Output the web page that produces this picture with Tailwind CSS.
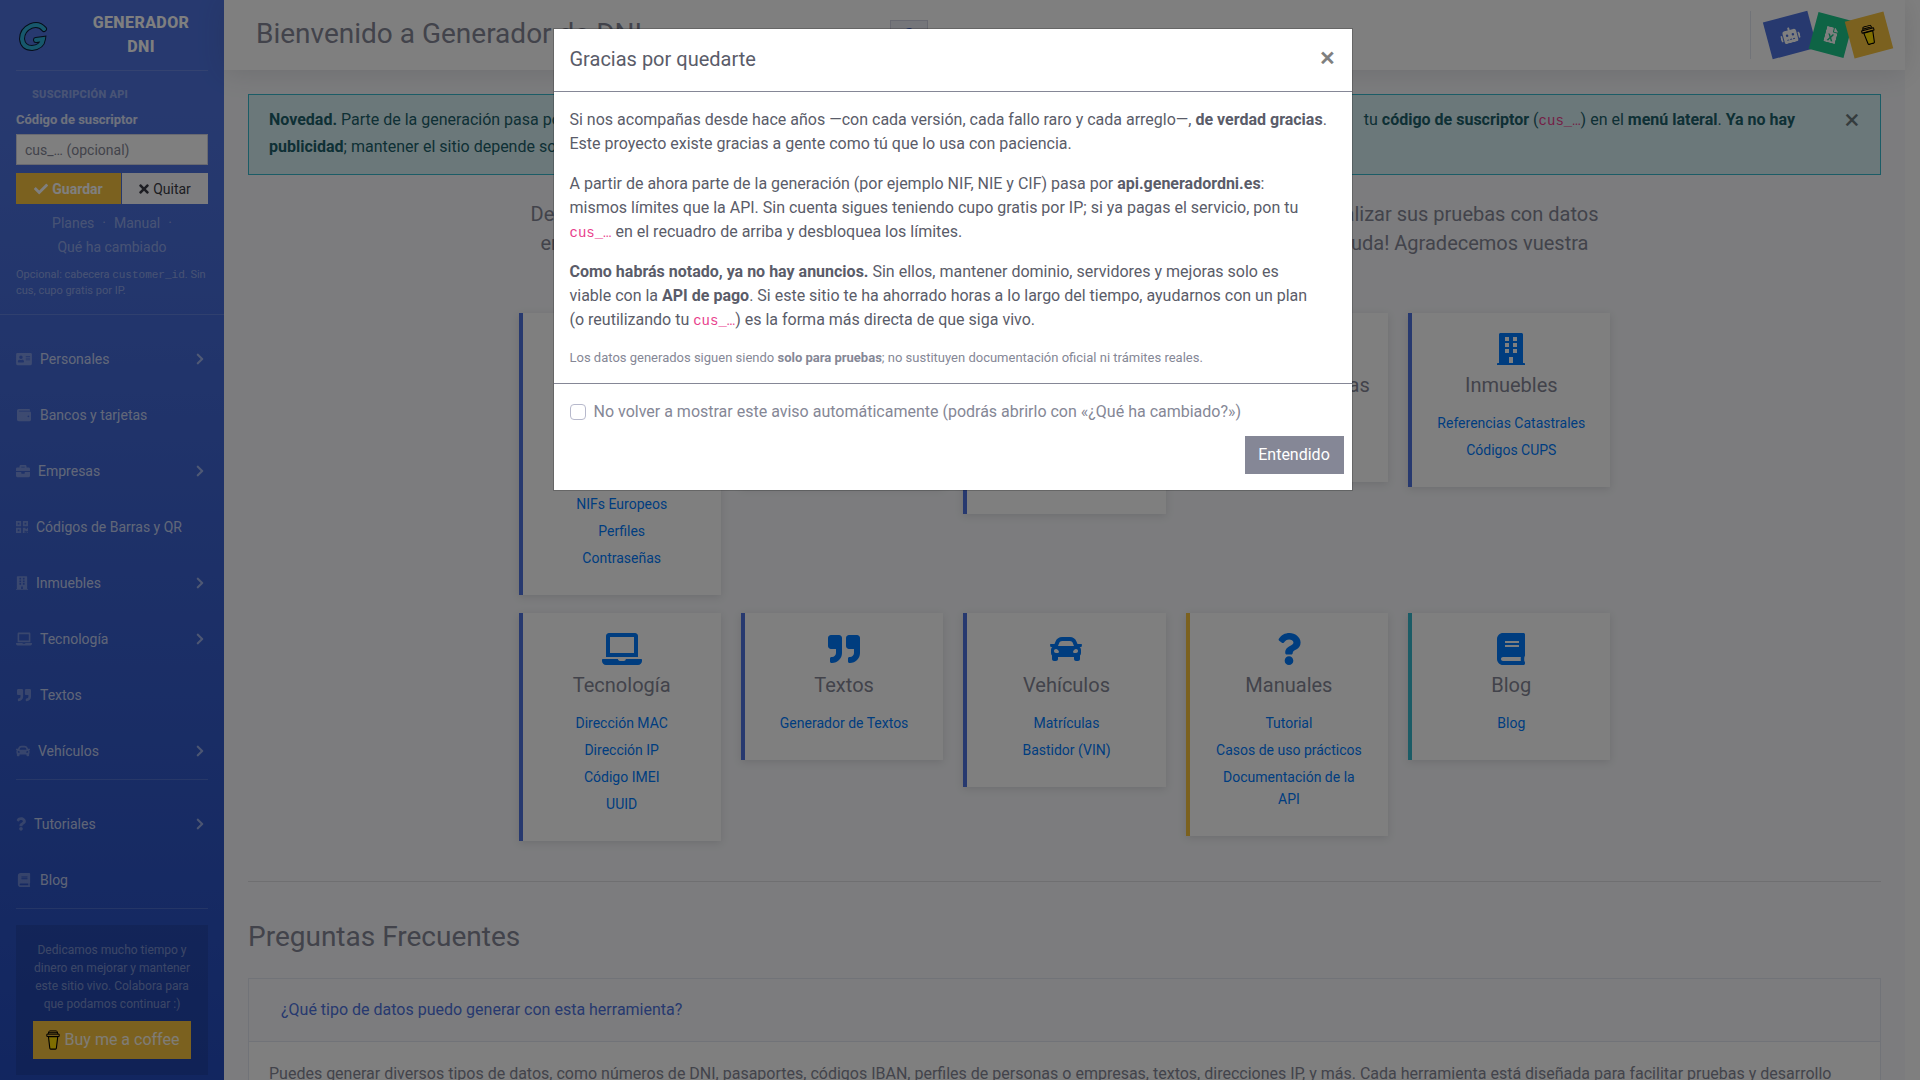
<!DOCTYPE html>
<html lang="es">
<head>
<meta charset="utf-8">
<meta name="viewport" content="width=device-width, initial-scale=1">
<title>Generador de DNI</title>
<script src="https://cdn.jsdelivr.net/npm/@tailwindcss/browser@4"></script>
</head>
<body class="h-screen overflow-hidden bg-white pr-[15px] font-[Roboto,sans-serif] text-base text-[#858796]">

<!-- Icon library -->
<svg class="hidden" aria-hidden="true">
  <symbol id="check" viewBox="0 0 512 512"><path d="M173.898 439.404l-166.4-166.4c-9.997-9.997-9.997-26.206 0-36.204l36.203-36.204c9.997-9.998 26.207-9.998 36.204 0L192 312.69 432.095 72.596c9.997-9.997 26.207-9.997 36.204 0l36.203 36.204c9.997 9.997 9.997 26.206 0 36.204l-294.4 294.401c-9.998 9.997-26.207 9.997-36.204-.001z"/></symbol>
  <symbol id="times" viewBox="0 0 352 512"><path d="M242.72 256l100.07-100.07c12.28-12.28 12.28-32.19 0-44.48l-22.24-22.24c-12.28-12.28-32.19-12.28-44.48 0L176 189.28 75.93 89.21c-12.28-12.28-32.19-12.28-44.48 0L9.21 111.45c-12.28 12.28-12.28 32.19 0 44.48L109.28 256 9.21 356.07c-12.28 12.28-12.28 32.19 0 44.48l22.24 22.24c12.28 12.28 32.2 12.28 44.48 0L176 322.72l100.07 100.07c12.28 12.28 32.2 12.28 44.48 0l22.24-22.24c12.28-12.28 12.28-32.19 0-44.48L242.72 256z"/></symbol>
  <symbol id="chevron" viewBox="0 0 320 512"><path d="M285.476 272.971L91.132 467.314c-9.373 9.373-24.569 9.373-33.941 0l-22.667-22.667c-9.357-9.357-9.375-24.522-.04-33.901L188.505 256 34.484 101.255c-9.335-9.379-9.317-24.544.04-33.901l22.667-22.667c9.373-9.373 24.569-9.373 33.941 0L285.475 239.03c9.373 9.372 9.373 24.568.001 33.941z"/></symbol>
  <symbol id="idcard" viewBox="0 0 576 512"><path fill-rule="evenodd" d="M48 32h480a48 48 0 0 1 48 48v352a48 48 0 0 1-48 48H48a48 48 0 0 1-48-48V80a48 48 0 0 1 48-48zm128 96a64 64 0 1 0 0 128 64 64 0 0 0 0-128zM64 360c0 13 10 24 22 24h180c12 0 22-11 22-24v-16c0-36-30-60-62-60-20 10-80 10-100 0-32 0-62 24-62 60zM352 144v32h160v-32zm0 64v32h160v-32zm0 64v32h160v-32z"/></symbol>
  <symbol id="wallet" viewBox="0 0 512 512"><path fill-rule="evenodd" d="M461 128H80a16 16 0 0 1 0-32h384c9 0 16-7 16-16 0-26-21-48-48-48H64C29 32 0 61 0 96v320c0 35 29 64 64 64h397c28 0 51-22 51-48V176c0-26-23-48-51-48zm-45 208a32 32 0 1 1 0-64 32 32 0 0 1 0 64z"/></symbol>
  <symbol id="briefcase" viewBox="0 0 512 512"><path fill-rule="evenodd" d="M320 336a16 16 0 0 1-16 16h-96a16 16 0 0 1-16-16v-48H0v144c0 26 22 48 48 48h416c26 0 48-22 48-48V288H320zm144-208h-80V80c0-26-22-48-48-48H176c-26 0-48 22-48 48v48H48c-26 0-48 22-48 48v80h512v-80c0-26-22-48-48-48zm-144 0H192V96h128z"/></symbol>
  <symbol id="qrcode" viewBox="0 0 448 512"><path fill-rule="evenodd" d="M0 224h192V32H0zm64-128h64v64H64zm192-64v192h192V32zm128 128h-64V96h64zM0 480h192V288H0zm64-128h64v64H64zm352-64h32v128h-96v-32h-32v96h-64V288h96v32h64zm0 160h32v32h-32zm-64 0h32v32h-32z"/></symbol>
  <symbol id="building" viewBox="0 0 448 512"><path fill-rule="evenodd" d="M436 480h-20V24c0-13.255-10.745-24-24-24H56C42.745 0 32 10.745 32 24v456H12c-6.627 0-12 5.373-12 12v20h448v-20c0-6.627-5.373-12-12-12zM128 64h64v64h-64zm128 0h64v64h-64zM128 160h64v64h-64zm128 0h64v64h-64zM128 256h64v64h-64zm128 0h64v64h-64zM192 384h64v96h-64z"/></symbol>
  <symbol id="laptop" viewBox="0 0 640 512"><path d="M624 416H381.54c-.74 19.81-14.71 32-32.74 32H288c-18.69 0-33.02-17.47-32.77-32H16c-8.8 0-16 7.2-16 16v16c0 35.2 28.8 64 64 64h512c35.2 0 64-28.8 64-64v-16c0-8.8-7.2-16-16-16zM576 48c0-26.4-21.6-48-48-48H112C85.6 0 64 21.6 64 48v336h512V48zm-64 272H128V64h384v256z"/></symbol>
  <symbol id="quote" viewBox="0 0 512 512"><path d="M464 32H336c-26.5 0-48 21.5-48 48v128c0 26.5 21.5 48 48 48h80v64c0 35.3-28.7 64-64 64h-8c-13.3 0-24 10.7-24 24v48c0 13.3 10.7 24 24 24h8c88.4 0 160-71.6 160-160V80c0-26.5-21.5-48-48-48zm-288 0H48C21.5 32 0 53.5 0 80v128c0 26.5 21.5 48 48 48h80v64c0 35.3-28.7 64-64 64h-8c-13.3 0-24 10.7-24 24v48c0 13.3 10.7 24 24 24h8c88.4 0 160-71.6 160-160V80c0-26.5-21.5-48-48-48z"/></symbol>
  <symbol id="car" viewBox="0 0 512 512"><path d="M499.99 176h-59.87l-16.64-41.6C406.38 91.63 365.57 64 319.5 64h-127c-46.06 0-86.88 27.63-103.99 70.4L71.87 176H12.01C4.2 176-1.53 183.34.37 190.91l6 24C7.7 220.25 12.5 224 18.01 224h20.07C24.65 235.73 16 252.78 16 272v48c0 16.12 6.16 30.67 16 41.93V416c0 17.67 14.33 32 32 32h32c17.67 0 32-14.33 32-32v-32h256v32c0 17.67 14.33 32 32 32h32c17.67 0 32-14.33 32-32v-54.07c9.84-11.25 16-25.8 16-41.93v-48c0-19.22-8.65-36.27-22.07-48H494c5.51 0 10.31-3.75 11.64-9.09l6-24c1.89-7.57-3.84-14.91-11.65-14.91zm-352.06-17.83c7.29-18.22 24.94-30.17 44.57-30.17h127c19.63 0 37.28 11.95 44.57 30.17L384 208H128l19.93-49.83zM96 319.8c-19.2 0-32-12.76-32-31.9S76.8 256 96 256s48 28.71 48 47.85-28.8 15.95-48 15.95zm320 0c-19.2 0-48 3.19-48-15.95S396.8 256 416 256s32 12.76 32 31.9-12.8 31.9-32 31.9z"/></symbol>
  <symbol id="question" viewBox="0 0 384 512"><path d="M202.021 0C122.202 0 70.503 32.703 29.914 91.026c-7.363 10.58-5.093 25.086 5.178 32.874l43.138 32.709c10.373 7.865 25.132 6.026 33.253-4.148 25.049-31.381 43.63-49.449 82.757-49.449 30.764 0 68.816 19.799 68.816 49.631 0 22.552-18.617 34.134-48.993 51.164-35.423 19.86-82.299 44.576-82.299 106.405V320c0 13.255 10.745 24 24 24h72.471c13.255 0 24-10.745 24-24v-5.773c0-42.86 125.268-44.645 125.268-160.627C377.504 66.256 286.902 0 202.021 0zM192 373.459c-38.196 0-69.271 31.075-69.271 69.271 0 38.195 31.075 69.27 69.271 69.27s69.271-31.075 69.271-69.271-31.075-69.27-69.271-69.27z"/></symbol>
  <symbol id="book" viewBox="0 0 448 512"><path d="M448 360V24c0-13.3-10.7-24-24-24H96C43 0 0 43 0 96v320c0 53 43 96 96 96h328c13.3 0 24-10.7 24-24v-16c0-7.5-3.5-14.3-8.9-18.7-4.2-15.4-4.2-59.3 0-74.7 5.4-4.3 8.9-11.1 8.9-18.6zM128 134c0-3.3 2.7-6 6-6h212c3.3 0 6 2.7 6 6v20c0 3.3-2.7 6-6 6H134c-3.3 0-6-2.7-6-6v-20zm0 64c0-3.3 2.7-6 6-6h212c3.3 0 6 2.7 6 6v20c0 3.3-2.7 6-6 6H134c-3.3 0-6-2.7-6-6v-20zm253.4 250H96c-17.7 0-32-14.3-32-32 0-17.6 14.4-32 32-32h285.4c-1.9 17.1-1.9 46.9 0 64z"/></symbol>
  <symbol id="robot" viewBox="0 0 640 512"><path d="M32,224H64V416H32A31.96166,31.96166,0,0,1,0,384V256A31.96166,31.96166,0,0,1,32,224Zm512-48V448a64.06328,64.06328,0,0,1-64,64H160a64.06328,64.06328,0,0,1-64-64V176a79.974,79.974,0,0,1,80-80H288V32a32,32,0,0,1,64,0V96H464A79.974,79.974,0,0,1,544,176ZM264,256a40,40,0,1,0-40,40A39.997,39.997,0,0,0,264,256Zm-8,128H192v32h64Zm96,0H288v32h64ZM456,256a40,40,0,1,0-40,40A39.997,39.997,0,0,0,456,256Zm-8,128H384v32h64ZM640,256V384a31.96166,31.96166,0,0,1-32,32H576V224h32A31.96166,31.96166,0,0,1,640,256Z"/></symbol>
  <symbol id="excel" viewBox="0 0 384 512"><path fill-rule="evenodd" d="M224 136V0H24C11 0 0 11 0 24v464c0 13 11 24 24 24h336c13 0 24-11 24-24V160H248c-13 0-24-11-24-24zM96 224h54l42 74 42-74h54l-68 112 68 112h-54l-42-74-42 74H96l68-112zM384 122v6H256V0h6c6 0 12 3 17 7l98 98c4 5 7 11 7 17z"/></symbol>
  <symbol id="coffee" viewBox="0 0 16 22"><path d="M3 7.500h10.200l-1.500 12.600q-.1.900-1 .9H5.500q-.9 0-1-.9z" fill="#fd0" stroke="#000" stroke-width="1.200"/><path d="M1.200 4.600h13.600v2.500H1.200zM2.600 4.400l1-2.800q.2-.6.800-.6h7.200q.6 0 .8.600l1 2.800M2.800 3h10.400" fill="none" stroke="#000" stroke-width="1.100" stroke-linejoin="round"/></symbol>
</svg>

<div class="flex min-h-full">

  <!-- Sidebar -->
  <nav class="w-56 shrink-0 bg-linear-to-b from-[#4e73df] from-10% to-[#224abe] pb-8" aria-label="Principal">
    <a href="#" class="mx-4 flex h-[70px] items-center text-center font-extrabold uppercase tracking-wide text-white">
      <svg class="mt-1 ml-0.5 h-8 w-8 shrink-0" viewBox="0 0 32 32" fill="none" stroke-linecap="round" aria-hidden="true">
        <path d="M26 8Q21 2 13 5 4 9 4 18q1 9 10 9 10-1 11-9l-7 1" stroke="#0b1c33" stroke-width="6"/>
        <path d="M26 8Q21 2 13 5 4 9 4 18q1 9 10 9 10-1 11-9l-7 1" stroke="#2fb0d8" stroke-width="4"/>
      </svg>
      <span class="ml-6 flex-1 leading-6">Generador<br>DNI</span>
    </a>
    <hr class="mx-4 border-white/15">

    <form class="px-4 pt-4">
      <p class="px-4 text-[11px] leading-[15px] font-extrabold uppercase tracking-wide text-white/40">Suscripción API</p>
      <label for="cus" class="mt-2 mb-1 block text-[13px] leading-5 font-bold text-white/80">Código de suscriptor</label>
      <input id="cus" type="text" placeholder="cus_… (opcional)" class="block h-[31px] w-full border border-[#d1d3e2] bg-white px-2 text-sm text-[#6e707e] placeholder:text-[#858796]">
      <div class="mt-2 flex text-sm">
        <button type="button" class="flex h-[31px] w-[105px] items-center justify-center gap-1 bg-[#f6c23e] font-bold text-white"><svg class="h-3.5 w-3.5 fill-current"><use href="#check"/></svg>Guardar</button>
        <button type="button" class="ml-px flex h-[31px] flex-1 items-center justify-center gap-1 bg-[#f8f9fc] text-[#3a3b45]"><svg class="h-3.5 w-2.5 fill-current"><use href="#times"/></svg>Quitar</button>
      </div>
      <p class="mt-[7px] text-center text-sm leading-6 text-white/40"><a href="#">Planes</a><span class="mx-2">·</span><a href="#">Manual</a><span class="ml-2">·</span><br><a href="#">Qué ha cambiado</a></p>
      <p class="mt-2 text-[11px] leading-[15px] whitespace-nowrap text-white/40">Opcional: cabecera <code class="font-['Liberation_Mono',monospace] text-[11px]">customer_id</code>. Sin<br>cus, cupo gratis por IP.</p>
    </form>
    <hr class="mt-4 border-white/15">

    <ul class="mt-4 text-sm text-white/70">
      <li><a href="#" class="flex h-14 items-center px-4"><svg class="mr-2 h-3.5 w-4 fill-white/30"><use href="#idcard"/></svg>Personales<svg class="mr-1 ml-auto h-3.5 w-2 fill-white/50"><use href="#chevron"/></svg></a></li>
      <li><a href="#" class="flex h-14 items-center px-4"><svg class="mr-2 h-3.5 w-4 fill-white/30"><use href="#wallet"/></svg>Bancos y tarjetas</a></li>
      <li><a href="#" class="flex h-14 items-center px-4"><svg class="mr-2 h-3.5 w-3.5 fill-white/30"><use href="#briefcase"/></svg>Empresas<svg class="mr-1 ml-auto h-3.5 w-2 fill-white/50"><use href="#chevron"/></svg></a></li>
      <li><a href="#" class="flex h-14 items-center px-4"><svg class="mr-2 h-3.5 w-3 fill-white/30"><use href="#qrcode"/></svg>Códigos de Barras y QR</a></li>
      <li><a href="#" class="flex h-14 items-center px-4"><svg class="mr-2 h-3.5 w-3 fill-white/30"><use href="#building"/></svg>Inmuebles<svg class="mr-1 ml-auto h-3.5 w-2 fill-white/50"><use href="#chevron"/></svg></a></li>
      <li><a href="#" class="flex h-14 items-center px-4"><svg class="mr-2 h-3.5 w-4 fill-white/30"><use href="#laptop"/></svg>Tecnología<svg class="mr-1 ml-auto h-3.5 w-2 fill-white/50"><use href="#chevron"/></svg></a></li>
      <li><a href="#" class="flex h-14 items-center px-4"><svg class="mr-2 h-3.5 w-4 fill-white/30"><use href="#quote"/></svg>Textos</a></li>
      <li><a href="#" class="flex h-14 items-center px-4"><svg class="mr-2 h-3.5 w-3.5 fill-white/30"><use href="#car"/></svg>Vehículos<svg class="mr-1 ml-auto h-3.5 w-2 fill-white/50"><use href="#chevron"/></svg></a></li>
    </ul>
    <hr class="mx-4 mb-4 border-white/15">
    <ul class="text-sm text-white/70">
      <li><a href="#" class="flex h-14 items-center px-4"><svg class="mr-2 h-3.5 w-2.5 fill-white/30"><use href="#question"/></svg>Tutoriales<svg class="mr-1 ml-auto h-3.5 w-2 fill-white/50"><use href="#chevron"/></svg></a></li>
      <li><a href="#" class="flex h-14 items-center px-4"><svg class="mr-2 h-3.5 w-4 fill-white/30"><use href="#book"/></svg>Blog</a></li>
    </ul>
    <hr class="mx-4 border-white/15">
    <div class="mx-4 mt-4 bg-black/10 p-4 text-center text-white/40">
      <p class="text-xs leading-[18px]">Dedicamos mucho tiempo y<br>dinero en mejorar y mantener<br>este sitio vivo. Colabora para<br>que podamos continuar :)</p>
      <a href="#" class="mx-auto mt-2 flex h-[38px] w-[158px] items-center justify-center gap-1 bg-[#f6c23e] text-base text-white/90"><svg class="h-5 w-4"><use href="#coffee"/></svg>Buy me a coffee</a>
    </div>
  </nav>

  <!-- Content -->
  <div class="min-w-0 flex-1 bg-[#f8f9fc]">
    <header class="flex h-[70px] items-center bg-white px-4 shadow-[0_2px_28px_rgba(58,59,69,0.15)]">
      <h1 class="mb-0.5 ml-4 text-[28px] leading-8 whitespace-nowrap">Bienvenido a Generador de DNI</h1>
      <div class="flex flex-1 justify-center pr-[574px]">
        <button type="button" aria-label="Ayuda" class="flex h-[31px] w-[38px] items-center justify-center border border-[#d1d3e2] bg-[#eaecf4]"><svg class="h-3.5 w-3 fill-[#4e73df]"><use href="#question"/></svg></button>
      </div>
      <div class="flex items-center">
        <span class="mr-4 h-12 w-px bg-[#e3e6f0]"></span>
        <a href="#" aria-label="Asistente" class="flex h-[38px] w-[46px] -rotate-15 items-center justify-center bg-[#4e73df]"><svg class="h-4 w-5 fill-white"><use href="#robot"/></svg></a>
        <a href="#" aria-label="Excel" class="flex h-[38px] w-9 rotate-15 items-center justify-center bg-[#1cc88a]"><svg class="h-4 w-3 fill-white"><use href="#excel"/></svg></a>
        <a href="#" aria-label="Buy me a coffee" class="flex h-[38px] w-10 -rotate-15 items-center justify-center bg-[#f6c23e]"><svg class="h-5 w-4"><use href="#coffee"/></svg></a>
      </div>
    </header>

    <main class="px-6 pt-6">
      <div class="flex border border-[#36b9cc] bg-[#d7f1f5] pt-[11px] pb-3.5 pl-5 leading-[27px] text-[#1c606a]">
        <div class="w-[1526px]">
          <p class="flex justify-between whitespace-nowrap"><span><b>Novedad.</b> Parte de la generación pasa por la API</span><span>tu <b>código de suscriptor</b> (<code class="font-['Liberation_Mono',monospace] text-sm text-[#e83e8c]">cus_…</code>) en el <b>menú lateral</b>. <b>Ya no hay</b></span></p>
          <p><b>publicidad</b>; mantener el sitio depende solo de la API.</p>
        </div>
        <button type="button" aria-label="Cerrar aviso" class="ml-auto h-7 w-14 text-[28px] leading-6 text-black/50">×</button>
      </div>

      <section class="mx-auto mt-[25px] max-w-[1092px]">
        <p class="flex justify-between px-3 text-xl leading-[29px] whitespace-nowrap"><span>Desde Generador de DNI</span><span>realizar sus pruebas con datos</span></p>
        <p class="flex justify-between px-[22px] text-xl leading-[29px] whitespace-nowrap"><span>en sus desarrollos.</span><span>ayuda! Agradecemos vuestra</span></p>
        <p class="text-center text-xl leading-[29px]">colaboración.</p>

        <div class="mt-[26px] grid grid-cols-5 items-start gap-x-5 gap-y-[18px] text-center">
          <article class="border-l-4 border-[#4e73df] bg-white px-5 pt-5 pb-[26px] shadow-[0_2px_8px_rgba(58,59,69,0.15)]">
            <svg class="mx-auto h-8 w-9 fill-[#007bff]"><use href="#idcard"/></svg>
            <h2 class="mt-2 mb-[15px] text-xl leading-6">Personales</h2>
            <ul class="flex flex-col gap-[5px] text-sm leading-[22px] text-[#007bff]"><li><a href="#">DNI y NIF</a></li><li><a href="#">NIE</a></li><li><a href="#">Pasaportes</a></li><li><a href="#">NIFs Europeos</a></li><li><a href="#">Perfiles</a></li><li><a href="#">Contraseñas</a></li></ul>
          </article>
          <article class="border-l-4 border-[#4e73df] bg-white px-5 pt-5 pb-[26px] shadow-[0_2px_8px_rgba(58,59,69,0.15)]">
            <svg class="mx-auto h-8 w-8 fill-[#007bff]"><use href="#wallet"/></svg>
            <h2 class="mt-2 mb-[15px] text-xl leading-6">Bancos</h2>
            <ul class="flex flex-col gap-[5px] text-sm leading-[22px] text-[#007bff]"><li><a href="#">Cuentas IBAN</a></li><li><a href="#">Tarjetas</a></li></ul>
          </article>
          <article class="border-l-4 border-[#4e73df] bg-white px-5 pt-5 pb-[26px] shadow-[0_2px_8px_rgba(58,59,69,0.15)]">
            <svg class="mx-auto h-8 w-8 fill-[#007bff]"><use href="#briefcase"/></svg>
            <h2 class="mt-2 mb-[15px] text-xl leading-6">Empresas</h2>
            <ul class="flex flex-col gap-[5px] text-sm leading-[22px] text-[#007bff]"><li><a href="#">CIF</a></li><li><a href="#">Perfiles</a></li><li><a href="#">Seguridad Social</a></li></ul>
          </article>
          <article class="border-l-4 border-[#4e73df] bg-white px-4 pt-5 pb-[26px] shadow-[0_2px_8px_rgba(58,59,69,0.15)]">
            <svg class="mx-auto h-8 w-7 fill-[#007bff]"><use href="#qrcode"/></svg>
            <h2 class="mt-2 mb-[15px] text-xl leading-6 whitespace-nowrap">Códigos de barras</h2>
            <ul class="flex flex-col gap-[5px] text-sm leading-[22px] text-[#007bff]"><li><a href="#">Códigos de<br>Barras y QR</a></li></ul>
          </article>
          <article class="border-l-4 border-[#4e73df] bg-white px-5 pt-5 pb-[26px] shadow-[0_2px_8px_rgba(58,59,69,0.15)]">
            <svg class="mx-auto h-8 w-7 fill-[#007bff]"><use href="#building"/></svg>
            <h2 class="mt-2 mb-[15px] text-xl leading-6">Inmuebles</h2>
            <ul class="flex flex-col gap-[5px] text-sm leading-[22px] text-[#007bff]"><li><a href="#">Referencias Catastrales</a></li><li><a href="#">Códigos CUPS</a></li></ul>
          </article>
          <article class="border-l-4 border-[#4e73df] bg-white px-5 pt-5 pb-[26px] shadow-[0_2px_8px_rgba(58,59,69,0.15)]">
            <svg class="mx-auto h-8 w-10 fill-[#007bff]"><use href="#laptop"/></svg>
            <h2 class="mt-2 mb-[15px] text-xl leading-6">Tecnología</h2>
            <ul class="flex flex-col gap-[5px] text-sm leading-[22px] text-[#007bff]"><li><a href="#">Dirección MAC</a></li><li><a href="#">Dirección IP</a></li><li><a href="#">Código IMEI</a></li><li><a href="#">UUID</a></li></ul>
          </article>
          <article class="border-l-4 border-[#4e73df] bg-white px-5 pt-5 pb-[26px] shadow-[0_2px_8px_rgba(58,59,69,0.15)]">
            <svg class="mx-auto h-8 w-8 fill-[#007bff]"><use href="#quote"/></svg>
            <h2 class="mt-2 mb-[15px] text-xl leading-6">Textos</h2>
            <ul class="flex flex-col gap-[5px] text-sm leading-[22px] text-[#007bff]"><li><a href="#">Generador de Textos</a></li></ul>
          </article>
          <article class="border-l-4 border-[#4e73df] bg-white px-5 pt-5 pb-[26px] shadow-[0_2px_8px_rgba(58,59,69,0.15)]">
            <svg class="mx-auto h-8 w-8 fill-[#007bff]"><use href="#car"/></svg>
            <h2 class="mt-2 mb-[15px] text-xl leading-6">Vehículos</h2>
            <ul class="flex flex-col gap-[5px] text-sm leading-[22px] text-[#007bff]"><li><a href="#">Matrículas</a></li><li><a href="#">Bastidor (VIN)</a></li></ul>
          </article>
          <article class="border-l-4 border-[#f6c23e] bg-white px-5 pt-5 pb-[26px] shadow-[0_2px_8px_rgba(58,59,69,0.15)]">
            <svg class="mx-auto h-8 w-6 fill-[#007bff]"><use href="#question"/></svg>
            <h2 class="mt-2 mb-[15px] text-xl leading-6">Manuales</h2>
            <ul class="flex flex-col gap-[5px] text-sm leading-[22px] text-[#007bff]"><li><a href="#">Tutorial</a></li><li><a href="#">Casos de uso prácticos</a></li><li><a href="#">Documentación de la<br>API</a></li></ul>
          </article>
          <article class="border-l-4 border-[#36b9cc] bg-white px-5 pt-5 pb-[26px] shadow-[0_2px_8px_rgba(58,59,69,0.15)]">
            <svg class="mx-auto h-8 w-7 fill-[#007bff]"><use href="#book"/></svg>
            <h2 class="mt-2 mb-[15px] text-xl leading-6">Blog</h2>
            <ul class="flex flex-col gap-[5px] text-sm leading-[22px] text-[#007bff]"><li><a href="#">Blog</a></li></ul>
          </article>
        </div>
      </section>

      <hr class="mt-10 border-black/10">
      <h2 class="mt-[38px] text-[28px] leading-[33px]">Preguntas Frecuentes</h2>
      <section class="mt-[25px] border border-[#e3e6f0] bg-white">
        <h3 class="border-b border-[#e3e6f0] bg-[#f8f9fc] px-8 py-5 leading-[22px]"><button type="button" class="text-[#4e73df]">¿Qué tipo de datos puedo generar con esta herramienta?</button></h3>
        <p class="p-5 leading-6">Puedes generar diversos tipos de datos, como números de DNI, pasaportes, códigos IBAN, perfiles de personas o empresas, textos, direcciones IP, y más. Cada herramienta está diseñada para facilitar pruebas y desarrollo<br>de software.</p>
      </section>
    </main>
  </div>
</div>

<div class="fixed inset-0 z-10 bg-black/50"></div>

<!-- Dialog -->
<div class="fixed inset-0 z-20 flex items-start justify-center pt-7 pr-[15px]">
  <div role="dialog" aria-modal="true" aria-labelledby="dlg" class="w-full max-w-[800px] border border-black/20 bg-white bg-clip-padding">
    <div class="flex h-[63px] items-start justify-between border-b border-[#858796] px-4 pt-[15px]">
      <h2 id="dlg" class="text-xl leading-[30px] text-[#5a5c69]">Gracias por quedarte</h2>
      <button type="button" aria-label="Cerrar" class="w-4 text-[28px] leading-7 font-medium text-black/50">×</button>
    </div>
    <div class="flex flex-col gap-4 border-b border-[#858796] p-4 leading-6 text-[#5a5c69]">
      <p>Si nos acompañas desde hace años —con cada versión, cada fallo raro y cada arreglo—, <b>de verdad gracias</b>.<br>Este proyecto existe gracias a gente como tú que lo usa con paciencia.</p>
      <p>A partir de ahora parte de la generación (por ejemplo NIF, NIE y CIF) pasa por <b>api.generadordni.es</b>:<br>mismos límites que la API. Sin cuenta sigues teniendo cupo gratis por IP; si ya pagas el servicio, pon tu<br><code class="font-['Liberation_Mono',monospace] text-sm text-[#e83e8c]">cus_…</code> en el recuadro de arriba y desbloquea los límites.</p>
      <p><b>Como habrás notado, ya no hay anuncios.</b> Sin ellos, mantener dominio, servidores y mejoras solo es<br>viable con la <b>API de pago</b>. Si este sitio te ha ahorrado horas a lo largo del tiempo, ayudarnos con un plan<br>(o reutilizando tu <code class="font-['Liberation_Mono',monospace] text-sm text-[#e83e8c]">cus_…</code>) es la forma más directa de que siga vivo.</p>
      <p class="text-[13px] leading-[19px] text-[#858796]">Los datos generados siguen siendo <b>solo para pruebas</b>; no sustituyen documentación oficial ni trámites reales.</p>
    </div>
    <div class="px-2 py-4">
      <label for="hide" class="flex items-center gap-2 px-2 leading-6 text-[#858796]"><input id="hide" type="checkbox" class="h-4 w-4 appearance-none rounded border border-[#b7b9cc] bg-white">No volver a mostrar este aviso automáticamente (podrás abrirlo con «¿Qué ha cambiado?»)</label>
      <button type="button" class="mt-3 ml-auto block h-[38px] w-[99px] bg-[#858796] text-white">Entendido</button>
    </div>
  </div>
</div>
</body>
</html>
